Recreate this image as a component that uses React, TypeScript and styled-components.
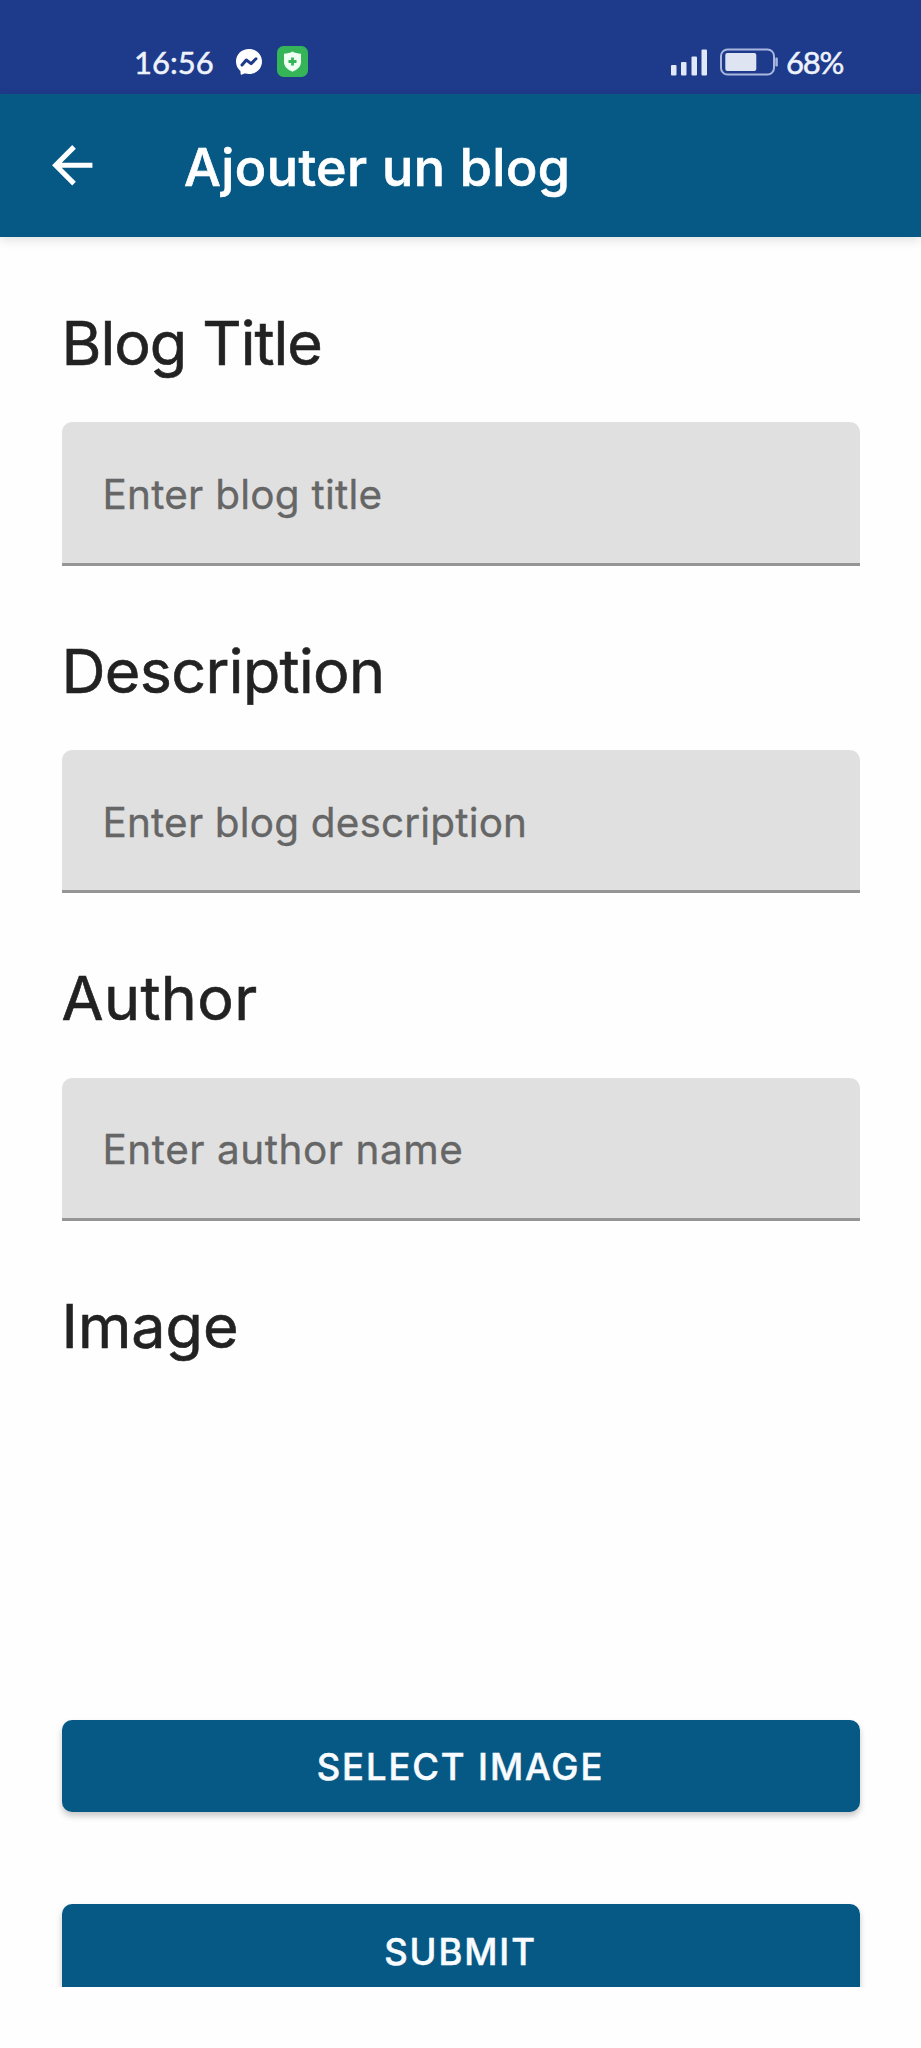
import React from "react";
import styled, { createGlobalStyle } from "styled-components";

const GlobalStyle = createGlobalStyle`
  *, *::before, *::after { box-sizing: border-box; }
  body { margin: 0; background: #fefefe; }
`;

const Screen = styled.div`
  width: 921px;
  height: 2048px;
  display: flex;
  flex-direction: column;
  overflow: hidden;
  background: #fefefe;
  font-family: Inter, "Liberation Sans", sans-serif;
`;

const StatusBar = styled.header`
  flex: none;
  height: 94px;
  padding: 28px 78px 0 134px;
  display: flex;
  justify-content: space-between;
  background: #1e3a8a;
`;

const StatusGroup = styled.div`
  height: 67px;
  display: flex;
  align-items: center;
`;

const StatusText = styled.span<{ $tracking: number }>`
  color: #eef2fc;
  font: 400 31px/66px Lato, sans-serif;
  letter-spacing: ${(p) => p.$tracking}px;
  white-space: nowrap;
  -webkit-text-stroke: 0.5px #eef2fc;
`;

const MessengerIcon = styled.svg`
  margin-left: 21px;
`;

const ShieldIcon = styled.svg`
  margin-left: 14px;
`;

const BatteryIcon = styled.svg`
  margin: 0 8px 0 12px;
`;

const AppBar = styled.div`
  flex: none;
  position: relative;
  z-index: 1;
  height: 143px;
  padding-left: 41.5px;
  display: flex;
  align-items: center;
  background: #075985;
  box-shadow: 0 3px 10px rgba(0, 0, 0, 0.12);
`;

const BackButton = styled.button`
  padding: 0;
  border: 0;
  width: 60.5px;
  height: 60.5px;
  background: none;
  color: #fff;
  svg { display: block; width: 100%; height: 100%; }
`;

const BarTitle = styled.h1`
  margin: 4px 0 0 82px;
  color: #fff;
  font-size: 52px;
  font-weight: 500;
  line-height: 64px;
  letter-spacing: 0.45px;
  -webkit-text-stroke: 0.7px #fff;
`;

const Form = styled.main`
  flex: none;
  height: 1749.5px;
  padding: 67px 61.5px 0;
  overflow: hidden;
`;

const Field = styled.section`
  height: 327.7px;
`;

const Label = styled.label<{ $tracking: number }>`
  display: block;
  height: 118.3px;
  margin: 0;
  color: #222;
  font-size: 61px;
  font-weight: 400;
  line-height: 78px;
  letter-spacing: ${(p) => p.$tracking}px;
  -webkit-text-stroke: 0.6px #222;
`;

const TextInput = styled.input<{ $tracking: number }>`
  display: block;
  width: 100%;
  height: 143.3px;
  padding: 4px 41px 0;
  border: 0;
  border-bottom: 3px solid #959595;
  border-radius: 10px 10px 0 0;
  outline: 0;
  background: #e0e0e0;
  color: #222;
  font: 400 40.5px Inter, "Liberation Sans", sans-serif;
  letter-spacing: ${(p) => p.$tracking}px;
  &::placeholder {
    color: #666;
    opacity: 1;
    -webkit-text-stroke: 0.3px #666;
  }
`;

const ImageField = styled.section`
  height: 432.6px;
`;

const Action = styled.button<{ $tracking: number }>`
  display: block;
  width: 100%;
  height: 92.4px;
  margin-bottom: 92px;
  padding: 3px 0 0;
  border: 0;
  border-radius: 10px;
  background: #075985;
  box-shadow: 0 4px 6px rgba(0, 0, 0, 0.22);
  color: #f8fcff;
  font: 500 36.4px Inter, "Liberation Sans", sans-serif;
  letter-spacing: ${(p) => p.$tracking}px;
  -webkit-text-stroke: 0.5px #f8fcff;
`;

const fields = [
  { id: "title", label: "Blog Title", hint: "Enter blog title", labelTracking: -1, hintTracking: 0.22 },
  { id: "description", label: "Description", hint: "Enter blog description", labelTracking: -0.65, hintTracking: 0.16 },
  { id: "author", label: "Author", hint: "Enter author name", labelTracking: 0.4, hintTracking: 0.52 },
];

export default function App() {
  return (
    <>
      <GlobalStyle />
      <Screen>
        <StatusBar>
          <StatusGroup>
            <StatusText $tracking={0}>16:56</StatusText>
            <MessengerIcon width="28" height="28" viewBox="0 0 28 28">
              <path
                fill="#fff"
                d="M14 1C6.600 1 1 6.400 1 13.500c0 3.800 1.500 7 4.100 9.200.3.300.4.600.4 1l.1 2c0 .7.700 1.200 1.400.900l2.500-1.100c.3-.1.500-.1.800 0 1.200.300 2.400.500 3.700.500 7.400 0 13-5.400 13-12.500S21.400 1 14 1z"
              />
              <path
                d="M7 17l4.300-5 4.800 3.600L21 10.800"
                fill="none"
                stroke="#1e3a8a"
                strokeWidth="3"
                strokeLinejoin="round"
                strokeLinecap="round"
              />
            </MessengerIcon>
            <ShieldIcon width="31" height="31" viewBox="0 0 31 31">
              <rect width="31" height="31" rx="6.500" fill="#35b558" />
              <path
                fill="#effff2"
                d="M15.500 5.500c2.500 1.500 5 2 8.500 2.200v8c0 4.800-3.300 7.700-8.500 10-5.200-2.300-8.500-5.200-8.500-10v-8c3.500-.2 6-.7 8.500-2.200z"
              />
              <path d="M15.500 11.500v8M11.500 15.500h8" stroke="#35b558" strokeWidth="2.800" />
            </ShieldIcon>
          </StatusGroup>
          <StatusGroup>
            <svg width="37" height="28" viewBox="0 0 37 28">
              <g fill="#e1e8f8">
                <rect x="0" y="17" width="5.500" height="10.500" rx="1" />
                <rect x="10" y="14" width="5.500" height="13.500" rx="1" />
                <rect x="20.500" y="8.500" width="5.500" height="19" rx="1" />
                <rect x="30.500" y="1.500" width="5.500" height="26" rx="1" />
              </g>
            </svg>
            <BatteryIcon width="58" height="28" viewBox="0 0 58 28">
              <rect x="1" y="1.500" width="53" height="25" rx="6.500" fill="none" stroke="#a9b7df" strokeWidth="2" />
              <rect x="5.300" y="5" width="31" height="18" rx="2" fill="#dfe4f3" />
              <rect x="55.300" y="9.500" width="2.500" height="9" rx="1" fill="#a9b7df" />
            </BatteryIcon>
            <StatusText $tracking={-1.3}>68%</StatusText>
          </StatusGroup>
        </StatusBar>
        <AppBar>
          <BackButton aria-label="Retour">
            <svg viewBox="0 0 24 24" fill="currentColor">
              <path d="M20 11H7.830l5.590-5.590L12 4l-8 8 8 8 1.410-1.410L7.830 13H20v-2z" />
            </svg>
          </BackButton>
          <BarTitle>Ajouter un blog</BarTitle>
        </AppBar>
        <Form>
          {fields.map((f) => (
            <Field key={f.id}>
              <Label htmlFor={f.id} $tracking={f.labelTracking}>{f.label}</Label>
              <TextInput id={f.id} placeholder={f.hint} $tracking={f.hintTracking} />
            </Field>
          ))}
          <ImageField>
            <Label as="h2" $tracking={0}>Image</Label>
          </ImageField>
          <Action $tracking={1.9}>SELECT IMAGE</Action>
          <Action $tracking={1.9}>SUBMIT</Action>
        </Form>
      </Screen>
    </>
  );
}
